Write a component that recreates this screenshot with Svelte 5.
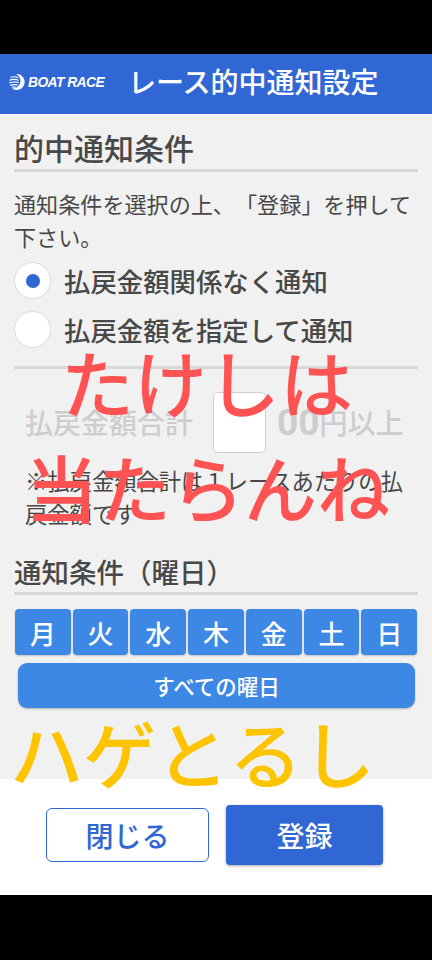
<script>
  const days = ['月', '火', '水', '木', '金', '土', '日'];
  const overlays = [
    { text: 'たけしは', cls: 'red', top: 339, left: 61 },
    { text: '当たらんね', cls: 'red', top: 444, left: 25 },
    { text: 'ハゲとるし', cls: 'yellow', top: 710, left: 10 }
  ];
</script>

<div class="screen">
  <div class="bar top"></div>

  <header class="header">
    <div class="logo">
      <svg width="18" height="18" viewBox="0 0 18 18" aria-hidden="true">
        <path d="M7 1A8 8 0 1 1 3 15.500C8 15.500 11.500 12 11.500 7.500 11.500 5 9.500 2.500 7 1Z" fill="#fff" />
        <path d="M1.500 4.500C4 3.500 7 3.700 9 4.800M.4 7.200C3.500 6 6.500 6.100 9.800 7.200M.3 9.800C3.500 8.800 6.500 8.800 9.800 9.500M1 12.300C3.500 11.500 6.500 11.500 8.800 12M3 14.400C4.500 14 6 14 7 14.200" stroke="#fff" stroke-width="1.100" fill="none" />
      </svg>
      <span class="logo-text">BOAT RACE</span>
    </div>
    <h1 class="title">レース的中通知設定</h1>
  </header>

  <main class="content">
    <h2 class="head first">的中通知条件</h2>
    <p class="text lead">通知条件を選択の上、「登録」を押して下さい。</p>

    <div class="radios">
      <div class="radio-row">
        <span class="radio"><span class="dot"></span></span>
        <span class="radio-label">払戻金額関係なく通知</span>
      </div>
      <div class="radio-row">
        <span class="radio"></span>
        <span class="radio-label">払戻金額を指定して通知</span>
      </div>
    </div>

    <div class="rule"></div>

    <div class="amount">
      <span class="amount-label">払戻金額合計</span>
      <span class="amount-input"></span>
      <span class="amount-zero">00</span>
      <span class="amount-unit">円以上</span>
    </div>

    <p class="text note">※払戻金額合計は１レースあたりの払戻金額です</p>

    <h2 class="head second">通知条件（曜日）</h2>

    <div class="days">
      {#each days as day}
        <button type="button" class="day">{day}</button>
      {/each}
    </div>
    <button type="button" class="all">すべての曜日</button>
  </main>

  <footer class="footer">
    <button type="button" class="close">閉じる</button>
    <button type="button" class="submit">登録</button>
  </footer>

  <div class="bar bottom"></div>

  {#each overlays as o}
    <div class="overlay {o.cls}" style="top: {o.top}px; left: {o.left}px">{o.text}</div>
  {/each}
</div>

<style>
  :global(body) {
    margin: 0;
    background: #000;
  }
  .screen {
    position: relative;
    width: 432px;
    height: 960px;
    overflow: hidden;
    display: flex;
    flex-direction: column;
    font-family: Roboto, "Noto Sans CJK JP", sans-serif;
    color: #484848;
    text-spacing-trim: space-all;
  }
  .bar { background: #000; flex: none; }
  .bar.top { height: 54px; }
  .bar.bottom { height: 65px; }

  .header {
    flex: none;
    height: 60px;
    background: #3167d4;
    display: flex;
    align-items: center;
    color: #fff;
  }
  .logo {
    display: flex;
    align-items: center;
    gap: 1px;
    width: 128px;
    padding-left: 9px;
    box-sizing: border-box;
    margin-top: -5px;
  }
  .logo-text {
    font-family: "Liberation Sans", sans-serif;
    font-weight: 700;
    font-style: italic;
    font-size: 15px;
    letter-spacing: -0.6px;
    white-space: nowrap;
    transform: scaleX(0.92);
    transform-origin: left center;
  }
  .title {
    margin: 0;
    font-size: 28px;
    font-weight: 500;
    line-height: 1;
    white-space: nowrap;
  }

  .content {
    flex: none;
    height: 665px;
    box-sizing: border-box;
    background: #f1f1f1;
    padding: 0 14px;
  }
  .head {
    margin: 0;
    font-weight: 500;
    line-height: 1.2;
    border-bottom: 3px solid #d8d8d8;
    white-space: nowrap;
  }
  .head.first {
    font-size: 30px;
    padding-top: 18px;
    height: 37px;
  }
  .head.second {
    font-size: 27.500px;
    margin-top: 23px;
    padding-top: 2px;
    height: 35px;
  }
  .text {
    margin: 0;
    line-height: 33px;
  }
  .lead {
    margin-top: 17px;
    font-size: 22.100px;
  }

  .radios { margin-top: 1px; }
  .radio-row {
    display: flex;
    align-items: center;
    gap: 13px;
    height: 49px;
  }
  .radio {
    width: 37px;
    height: 37px;
    box-sizing: border-box;
    border: 1px solid #dcdcdc;
    border-radius: 50%;
    background: #fff;
    display: flex;
    align-items: center;
    justify-content: center;
  }
  .dot {
    width: 14px;
    height: 14px;
    border-radius: 50%;
    background: #3167d4;
  }
  .radio-label {
    font-size: 26.400px;
    font-weight: 500;
    white-space: nowrap;
  }
  .rule {
    height: 3px;
    background: #d8d8d8;
    margin-top: 12px;
  }

  .amount {
    display: flex;
    align-items: center;
    margin-top: 22px;
    padding-left: 11px;
    height: 62px;
    color: #cdcdd0;
    font-size: 28px;
    font-weight: 500;
    white-space: nowrap;
  }
  .amount-input {
    width: 53px;
    height: 61px;
    box-sizing: border-box;
    border: 1px solid #cfcfcf;
    border-radius: 5px;
    background: #fff;
    margin-left: 20px;
  }
  .amount-zero {
    font-size: 37px;
    font-weight: 700;
    margin-left: 11px;
  }
  .note {
    margin-top: 13px;
    padding-left: 11px;
    font-size: 22.300px;
  }

  .days {
    display: flex;
    gap: 2px;
    margin-top: 14px;
    margin-left: 1px;
    width: 402px;
  }
  .day {
    flex: 1;
    height: 46px;
    padding: 0;
    border: none;
    border-radius: 4px;
    background: #3d88e4;
    color: #fff;
    font-family: inherit;
    font-size: 26px;
    font-weight: 500;
    box-shadow: 0 1px 2px rgba(0, 0, 0, 0.2);
  }
  .all {
    display: block;
    width: 397px;
    height: 45px;
    margin: 8px 0 0 4px;
    padding: 0;
    border: none;
    border-radius: 9px;
    background: #3d88e4;
    color: #fff;
    font-family: inherit;
    font-size: 21.500px;
    font-weight: 500;
    box-shadow: 0 1px 2px rgba(0, 0, 0, 0.25);
  }

  .footer {
    flex: none;
    height: 116px;
    background: #fff;
    display: flex;
    align-items: center;
    gap: 17px;
    padding: 0 0 4px 46px;
    box-sizing: border-box;
  }
  .close {
    width: 163px;
    height: 54px;
    box-sizing: border-box;
    border: 1px solid #3167d4;
    border-radius: 6px;
    background: #fff;
    color: #3167d4;
    font-family: inherit;
    font-size: 28px;
    font-weight: 500;
    padding: 0;
  }
  .submit {
    width: 157px;
    height: 60px;
    border: none;
    border-radius: 4px;
    background: #3167d4;
    color: #fff;
    font-family: inherit;
    font-size: 28px;
    font-weight: 500;
    padding: 0;
    box-shadow: 0 1px 3px rgba(0, 0, 0, 0.35);
  }

  .overlay {
    position: absolute;
    font-size: 73px;
    font-weight: 500;
    line-height: 96px;
    white-space: nowrap;
    pointer-events: none;
  }
  .red { color: #ff5252; }
  .yellow { color: #ffc400; }
</style>
